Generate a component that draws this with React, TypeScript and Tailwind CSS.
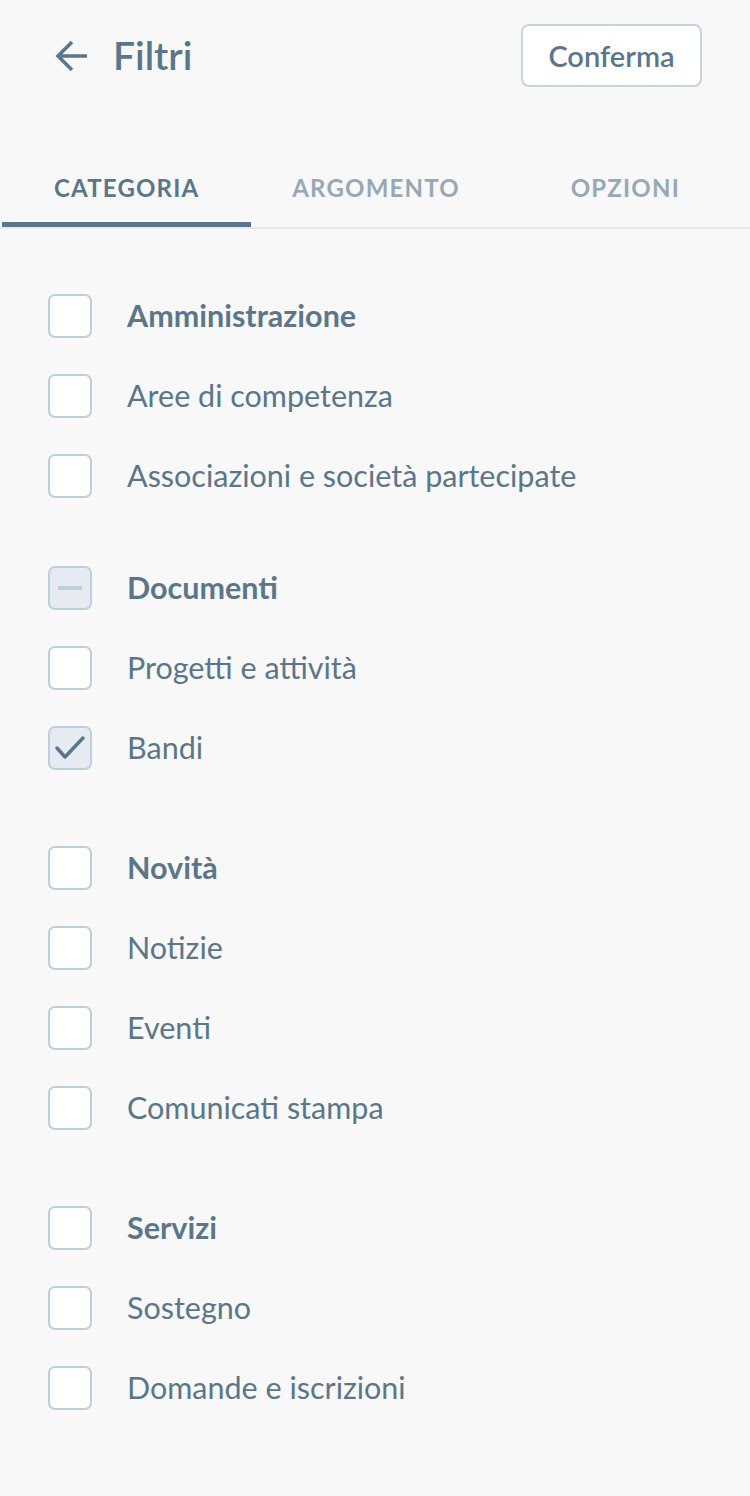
import React from "react";

type Item = { label: string; state?: "checked" | "mixed"; head?: boolean };

const groups: { gap: string; items: Item[] }[] = [
  {
    gap: "mt-0",
    items: [
      { label: "Amministrazione", head: true },
      { label: "Aree di competenza" },
      { label: "Associazioni e società partecipate" },
    ],
  },
  {
    gap: "mt-8",
    items: [
      { label: "Documenti", head: true, state: "mixed" },
      { label: "Progetti e attività" },
      { label: "Bandi", state: "checked" },
    ],
  },
  {
    gap: "mt-10",
    items: [
      { label: "Novità", head: true },
      { label: "Notizie" },
      { label: "Eventi" },
      { label: "Comunicati stampa" },
    ],
  },
  {
    gap: "mt-10",
    items: [
      { label: "Servizi", head: true },
      { label: "Sostegno" },
      { label: "Domande e iscrizioni" },
    ],
  },
];

function Box({ state }: { state?: Item["state"] }) {
  const filled = state === "checked" || state === "mixed";
  return (
    <span
      className={`flex h-[44px] w-[44px] shrink-0 items-center justify-center rounded-[7px] border-2 border-[#bccfdd] ${
        filled ? "bg-[#e5ebf1]" : "bg-white"
      }`}
    >
      {state === "mixed" && <span className="h-[4px] w-[24px] bg-[#bccfdd]" />}
      {state === "checked" && (
        <svg width="32" height="28" viewBox="0 0 32 28" fill="none">
          <path d="M3 14 L11 23 L29 4" stroke="#5b768b" strokeWidth="3.5" strokeLinecap="round" strokeLinejoin="round" />
        </svg>
      )}
    </span>
  );
}

export default function App() {
  return (
    <div className="min-h-[1496px] w-[750px] bg-[#f8f8f8] text-[#5b768b] font-['Lato',sans-serif]">
      <header className="flex items-center justify-between pl-[55px] pr-[48px] pt-[24px]">
        <div className="flex items-center gap-[24px]">
          <svg width="34" height="34" viewBox="0 0 34 34" fill="none">
            <path d="M32 17H3M17 3 3 17l14 14" stroke="#5b768b" strokeWidth="3.5" strokeLinejoin="miter" />
          </svg>
          <h1 className="text-[39px] font-semibold leading-none">Filtri</h1>
        </div>
        <button className="h-[63px] w-[181px] rounded-[8px] border-2 border-[#c4d4e0] bg-white text-[29px] font-semibold">
          Conferma
        </button>
      </header>

      <nav className="mt-[62px] flex border-b-2 border-[#e4e9ee]">
        {["CATEGORIA", "ARGOMENTO", "OPZIONI"].map((t, i) => (
          <div
            key={t}
            className={`flex h-[78px] w-[250px] items-center justify-center text-[24px] font-bold tracking-[1.2px] ${
              i === 0 ? "mb-[-2px] ml-[2px] border-b-[5px] border-[#5b768b] pt-[5px] text-[#5b768b]" : "text-[#97a8b6]"
            }`}
          >
            {t}
          </div>
        ))}
      </nav>

      <div className="px-[48px] pt-[47px] pb-10">
        {groups.map((g, gi) => (
          <ul key={gi} className={g.gap}>
            {g.items.map((it) => (
              <li key={it.label} className="flex h-[80px] items-center gap-[35px]">
                <Box state={it.state} />
                <span className={`text-[30.5px] ${it.head ? "font-bold" : "font-normal"}`}>{it.label}</span>
              </li>
            ))}
          </ul>
        ))}
      </div>
    </div>
  );
}
